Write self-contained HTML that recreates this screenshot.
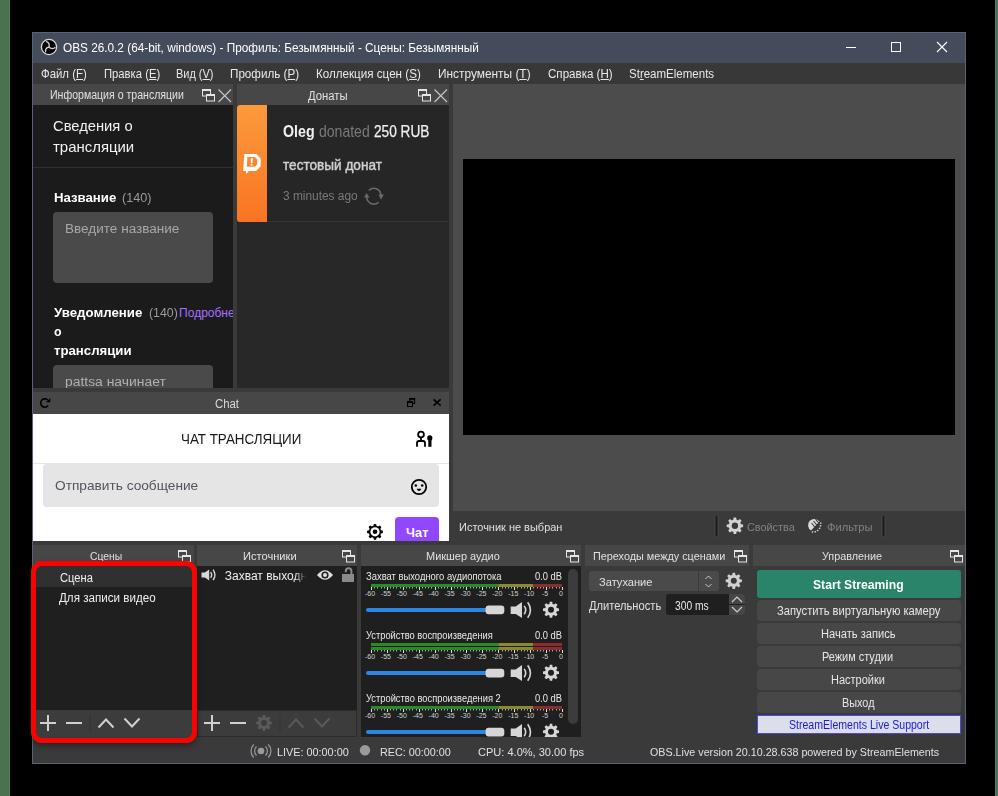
<!DOCTYPE html>
<html><head><meta charset="utf-8"><style>
*{margin:0;padding:0;box-sizing:border-box}
html,body{width:998px;height:796px;overflow:hidden;background:#000;font-family:"Liberation Sans",sans-serif}
.a{position:absolute}
.t{position:absolute;white-space:nowrap;line-height:1;transform-origin:0 0;font-family:"Liberation Sans",sans-serif}
u{text-decoration:underline;text-underline-offset:1px;text-decoration-thickness:1px}
svg{position:absolute;overflow:visible}

</style></head><body>
<div class="a" style="left:0;top:0;width:10px;height:796px;background:#4a7250"></div>
<div class="a" style="left:9px;top:0;width:1px;height:796px;background:#538059"></div>
<div class="a" style="left:995px;top:0;width:3px;height:796px;background:#4a7250"></div>
<div class="a" style="left:995px;top:0;width:1px;height:796px;background:#538059"></div>
<!-- window frame -->
<div class="a" style="left:32px;top:32px;width:934px;height:732px;background:#5b6274"></div>
<div class="a" style="left:33px;top:33px;width:932px;height:730px;background:#3a3a3a"></div>
<!-- title bar -->
<div class="a" style="left:33px;top:33px;width:932px;height:30px;background:#444b5b"></div>
<svg style="left:0;top:0" width="998" height="80">
  <circle cx="49" cy="47" r="7.6" fill="#000" stroke="#d8d8d8" stroke-width="1.3"/>
  <path d="M49 47 Q50.23 42.98 46.00 41.35 M49 47 Q51.86 50.07 55.40 47.22 M49 47 Q44.91 47.94 45.61 52.43" fill="none" stroke="#d0d0d0" stroke-width="1.3"/>
  <rect x="846" y="47" width="10" height="1" fill="#fff"/>
  <rect x="891.5" y="42.5" width="9" height="9" fill="none" stroke="#fff" stroke-width="1"/>
  <path d="M937 42 L947 52 M947 42 L937 52" stroke="#fff" stroke-width="1.1"/>
</svg>
<!-- menu bar -->
<div class="a" style="left:33px;top:63px;width:932px;height:21px;background:#383838"></div>

<!-- info dock -->
<div class="a" style="left:33px;top:84px;width:200px;height:21px;background:#474747"></div>
<div class="a" style="left:33px;top:105px;width:200px;height:283px;background:#1b1b1c;overflow:hidden">
  <div class="a" style="left:0;top:62px;width:200px;height:1px;background:#303034"></div>
  <div class="a" style="left:20px;top:107px;width:160px;height:71px;background:#4a4a4b;border-radius:4px"></div>
  <div class="a" style="left:20px;top:260px;width:160px;height:60px;background:#4a4a4b;border-radius:4px"></div>
</div>
<!-- donations dock -->
<div class="a" style="left:237px;top:84px;width:212px;height:21px;background:#474747"></div>
<div class="a" style="left:237px;top:105px;width:212px;height:283px;background:#282828"></div>
<div class="a" style="left:237px;top:105px;width:211px;height:117px;background:#262626;border-bottom:1px solid #353535"></div>
<div class="a" style="left:237px;top:105px;width:30px;height:117px;background:linear-gradient(#fb9a3b,#f97424);border-radius:3px 0 0 3px"></div>

<!-- preview -->
<div class="a" style="left:453px;top:84px;width:512px;height:427px;background:#4c4c4c"></div>
<div class="a" style="left:463px;top:159px;width:492px;height:276px;background:#000"></div>

<!-- chat dock -->
<div class="a" style="left:33px;top:392px;width:416px;height:22px;background:#474747"></div>
<div class="a" style="left:33px;top:414px;width:416px;height:127px;background:#fff;overflow:hidden">
  <div class="a" style="left:0;top:49px;width:416px;height:1px;background:#e6e6e6"></div>
  <div class="a" style="left:10px;top:50px;width:396px;height:43px;background:#e5e5e5;border-radius:4px"></div>
  <div class="a" style="left:362px;top:103px;width:44px;height:40px;background:#9147ff;border-radius:4px"></div>
</div>

<!-- bottom docks titles -->
<div class="a" style="left:33px;top:545px;width:161px;height:21px;background:#474747"></div>
<div class="a" style="left:197px;top:545px;width:160px;height:21px;background:#474747"></div>
<div class="a" style="left:361px;top:545px;width:220px;height:21px;background:#474747"></div>
<div class="a" style="left:585px;top:545px;width:164px;height:21px;background:#474747"></div>
<div class="a" style="left:753px;top:545px;width:212px;height:21px;background:#474747"></div>
<!-- scenes -->
<div class="a" style="left:33px;top:566px;width:161px;height:144px;background:#1f1f1f"></div>
<div class="a" style="left:33px;top:566px;width:161px;height:21px;background:#303030"></div>
<div class="a" style="left:33px;top:710px;width:161px;height:27px;background:#3c3c3c"></div>
<!-- sources -->
<div class="a" style="left:197px;top:566px;width:160px;height:144px;background:#1f1f1f"></div>
<div class="a" style="left:197px;top:710px;width:160px;height:27px;background:#3c3c3c;border:1px solid #2c2c2c"></div>
<!-- mixer -->
<div class="a" style="left:361px;top:566px;width:220px;height:171px;background:#1f1f1f"></div>
<div class="a" style="left:568px;top:569px;width:10px;height:155px;background:#3c3c3c;border-radius:5px"></div>
<!-- transitions -->
<div class="a" style="left:589px;top:571px;width:130px;height:20px;background:#4a4a4a;border-radius:3px"></div>
<div class="a" style="left:698px;top:571px;width:1px;height:20px;background:#3a3a3a"></div>
<div class="a" style="left:666px;top:594px;width:79px;height:21px;background:#1f1f1f;border-radius:3px"></div>
<div class="a" style="left:729px;top:594px;width:16px;height:10px;background:#464646;border-radius:0 3px 0 0"></div>
<div class="a" style="left:729px;top:605px;width:16px;height:10px;background:#464646;border-radius:0 0 3px 0"></div>
<!-- controls -->
<div class="a" style="left:757px;top:570px;width:204px;height:28px;background:#29846a;border-radius:3px"></div>
<div class="a" style="left:757px;top:600px;width:204px;height:21px;background:#474747;border-radius:4px"></div>
<div class="a" style="left:757px;top:623px;width:204px;height:21px;background:#474747;border-radius:4px"></div>
<div class="a" style="left:757px;top:646px;width:204px;height:21px;background:#474747;border-radius:4px"></div>
<div class="a" style="left:757px;top:669px;width:204px;height:21px;background:#474747;border-radius:4px"></div>
<div class="a" style="left:757px;top:692px;width:204px;height:21px;background:#474747;border-radius:4px"></div>
<div class="a" style="left:757px;top:715px;width:204px;height:19px;background:#dcdeec;border:1px solid #4a4ae0"></div>

<svg style="left:0;top:0" width="998" height="796">
<rect x="202.5" y="89.5" width="8" height="6.5" fill="none" stroke="#e6e6e6" stroke-width="1"/><rect x="202" y="89" width="9" height="2" fill="#e6e6e6"/><rect x="206" y="94" width="9" height="7.5" fill="#474747"/><rect x="206.5" y="94.5" width="8" height="6.5" fill="none" stroke="#e6e6e6" stroke-width="1"/><rect x="206" y="94" width="9" height="2" fill="#e6e6e6"/>
<path d="M218.5 89.5 L231 102 M231 89.5 L218.5 102" stroke="#c8c8c8" stroke-width="1.1"/>
<rect x="418.5" y="89.5" width="8" height="6.5" fill="none" stroke="#e6e6e6" stroke-width="1"/><rect x="418" y="89" width="9" height="2" fill="#e6e6e6"/><rect x="422" y="94" width="9" height="7.5" fill="#474747"/><rect x="422.5" y="94.5" width="8" height="6.5" fill="none" stroke="#e6e6e6" stroke-width="1"/><rect x="422" y="94" width="9" height="2" fill="#e6e6e6"/>
<path d="M434.5 89.5 L447 102 M447 89.5 L434.5 102" stroke="#c8c8c8" stroke-width="1.1"/>
<path d="M244.3 154 L256.5 154 L260.8 158.8 L260.5 166.5 L256 171 L248.8 171 L246.2 174 L245.8 171 L243.2 171 Z M247.3 157 L246.9 166.8 L255 166.8 L257.2 164.5 L257.3 159.5 L255 157 Z" fill="#fff" fill-rule="evenodd"/>
<path d="M250.7 158.3 L253 158.3 L252.5 163.3 L250.9 163.3 Z M250.7 164 L252.6 164 L252.5 165.6 L250.6 165.6 Z" fill="#fff"/>
<path d="M368.8 190.5 A7 7 0 0 1 380.8 196" fill="none" stroke="#6a6a6a" stroke-width="1.5"/>
<path d="M378.5 194.5 L383.8 194.5 L381 199.8 Z" fill="#6a6a6a"/>
<path d="M378.6 202.2 A7 7 0 0 1 366.8 196.8" fill="none" stroke="#6a6a6a" stroke-width="1.5"/>
<path d="M364 197.5 L369.5 197.5 L366.5 193 Z" fill="#6a6a6a"/>
<path d="M47.6 399.8 A4.2 4.2 0 1 0 48.2 405.6" fill="none" stroke="#000" stroke-width="1.6"/>
<path d="M50.3 397.9 L50.3 402.3 L45.9 402.3 Z" fill="#000"/>
<rect x="409.8" y="398.5" width="4.8" height="5" fill="none" stroke="#000" stroke-width="1.1"/><rect x="409.3" y="398" width="5.8" height="1.8" fill="#000"/>
<rect x="407" y="401" width="6" height="6" fill="#474747"/><rect x="407.5" y="401.5" width="5" height="5" fill="none" stroke="#000" stroke-width="1.1"/><rect x="407" y="401" width="6" height="2" fill="#000"/>
<path d="M433.6 399.4 L440.6 405.6 M440.6 399.4 L433.6 405.6" stroke="#000" stroke-width="1.7"/>
<circle cx="421" cy="434.5" r="2.9" fill="none" stroke="#000" stroke-width="1.8"/>
<path d="M421 437.4 V440.5 M417 446.8 V443 Q417 441 419 441 L423 441 Q425 441 425 443 V446.8" fill="none" stroke="#000" stroke-width="1.8"/>
<circle cx="429.8" cy="437.9" r="2.6" fill="#000"/><path d="M428.3 439 H431.5 V446.8 H428.3 Z" fill="#000"/>
<circle cx="419" cy="487" r="7.2" fill="none" stroke="#000" stroke-width="1.8"/>
<circle cx="415.8" cy="485.4" r="1.25" fill="#000"/><circle cx="422.2" cy="485.4" r="1.25" fill="#000"/><path d="M416.6 488.8 Q419 493.2 421.4 488.8 Z" fill="#000"/>
<path d="M372.63 526.07 L373.42 525.80 L373.90 523.88 L376.10 523.88 L376.58 525.80 L377.37 526.07 L378.12 526.44 L379.83 525.42 L381.38 526.97 L380.36 528.68 L380.73 529.43 L381.00 530.22 L382.92 530.70 L382.92 532.90 L381.00 533.38 L380.73 534.17 L380.36 534.92 L381.38 536.63 L379.83 538.18 L378.12 537.16 L377.37 537.53 L376.58 537.80 L376.10 539.72 L373.90 539.72 L373.42 537.80 L372.63 537.53 L371.88 537.16 L370.17 538.18 L368.62 536.63 L369.64 534.92 L369.27 534.17 L369.00 533.38 L367.08 532.90 L367.08 530.70 L369.00 530.22 L369.27 529.43 L369.64 528.68 L368.62 526.97 L370.17 525.42 L371.88 526.44 Z M377.20 531.80 A2.2 2.2 0 1 0 372.80 531.80 A2.2 2.2 0 1 0 377.20 531.80 Z" fill="#000" fill-rule="evenodd"/>
<circle cx="375" cy="531.8" r="4.6" fill="#fff"/><circle cx="375" cy="531.8" r="2.3" fill="#000"/>
<rect x="715" y="515" width="3" height="22" fill="#1e1e1e"/><rect x="715" y="515" width="3" height="22" fill="none" stroke="#555" stroke-width="0.6"/>
<rect x="882" y="515" width="3" height="22" fill="#1e1e1e"/><rect x="882" y="515" width="3" height="22" fill="none" stroke="#555" stroke-width="0.6"/>
<path d="M732.53 520.07 L733.25 519.82 L733.67 517.59 L736.13 517.59 L736.55 519.82 L737.27 520.07 L737.96 520.41 L739.83 519.12 L741.58 520.87 L740.29 522.74 L740.63 523.43 L740.88 524.15 L743.11 524.57 L743.11 527.03 L740.88 527.45 L740.63 528.17 L740.29 528.86 L741.58 530.73 L739.83 532.48 L737.96 531.19 L737.27 531.53 L736.55 531.78 L736.13 534.01 L733.67 534.01 L733.25 531.78 L732.53 531.53 L731.84 531.19 L729.97 532.48 L728.22 530.73 L729.51 528.86 L729.17 528.17 L728.92 527.45 L726.69 527.03 L726.69 524.57 L728.92 524.15 L729.17 523.43 L729.51 522.74 L728.22 520.87 L729.97 519.12 L731.84 520.41 Z M738.10 525.80 A3.2 3.2 0 1 0 731.70 525.80 A3.2 3.2 0 1 0 738.10 525.80 Z" fill="#d2d2d2" fill-rule="evenodd"/>
<path d="M819.5 521.5 A6.3 6.3 0 1 0 811 530.5 Z" fill="#dcdcdc"/>
<path d="M811.5 523 L816 528.5 M813.5 521 L818 526.5 M815.5 519.2 L820 524.5" stroke="#3a3a3a" stroke-width="1.1"/>
<path d="M820.5 522.5 A7.8 7.8 0 0 1 811 531.8" fill="none" stroke="#dcdcdc" stroke-width="1.5" stroke-dasharray="1.3 1.4"/>
<rect x="178.5" y="550.5" width="8" height="6.5" fill="none" stroke="#e6e6e6" stroke-width="1"/><rect x="178" y="550" width="9" height="2" fill="#e6e6e6"/><rect x="182" y="555" width="9" height="7.5" fill="#474747"/><rect x="182.5" y="555.5" width="8" height="6.5" fill="none" stroke="#e6e6e6" stroke-width="1"/><rect x="182" y="555" width="9" height="2" fill="#e6e6e6"/>
<rect x="342.5" y="550.5" width="8" height="6.5" fill="none" stroke="#e6e6e6" stroke-width="1"/><rect x="342" y="550" width="9" height="2" fill="#e6e6e6"/><rect x="346" y="555" width="9" height="7.5" fill="#474747"/><rect x="346.5" y="555.5" width="8" height="6.5" fill="none" stroke="#e6e6e6" stroke-width="1"/><rect x="346" y="555" width="9" height="2" fill="#e6e6e6"/>
<rect x="566.5" y="550.5" width="8" height="6.5" fill="none" stroke="#e6e6e6" stroke-width="1"/><rect x="566" y="550" width="9" height="2" fill="#e6e6e6"/><rect x="570" y="555" width="9" height="7.5" fill="#474747"/><rect x="570.5" y="555.5" width="8" height="6.5" fill="none" stroke="#e6e6e6" stroke-width="1"/><rect x="570" y="555" width="9" height="2" fill="#e6e6e6"/>
<rect x="734.5" y="550.5" width="8" height="6.5" fill="none" stroke="#e6e6e6" stroke-width="1"/><rect x="734" y="550" width="9" height="2" fill="#e6e6e6"/><rect x="738" y="555" width="9" height="7.5" fill="#474747"/><rect x="738.5" y="555.5" width="8" height="6.5" fill="none" stroke="#e6e6e6" stroke-width="1"/><rect x="738" y="555" width="9" height="2" fill="#e6e6e6"/>
<rect x="950.5" y="550.5" width="8" height="6.5" fill="none" stroke="#e6e6e6" stroke-width="1"/><rect x="950" y="550" width="9" height="2" fill="#e6e6e6"/><rect x="954" y="555" width="9" height="7.5" fill="#474747"/><rect x="954.5" y="555.5" width="8" height="6.5" fill="none" stroke="#e6e6e6" stroke-width="1"/><rect x="954" y="555" width="9" height="2" fill="#e6e6e6"/>
<path d="M40 723 H56 M48 715 V731" stroke="#d0d0d0" stroke-width="2"/>
<path d="M66 723 H82" stroke="#d0d0d0" stroke-width="2"/>
<rect x="89.5" y="715" width="1" height="17" fill="#333"/>
<path d="M98.5 727.5 L106 719.5 L113.5 727.5" fill="none" stroke="#d0d0d0" stroke-width="2"/>
<path d="M124.5 718.5 L132 726.5 L139.5 718.5" fill="none" stroke="#d0d0d0" stroke-width="2"/>
<g transform="translate(201.5,569.4) scale(0.68)"><path d="M0 4.5 H5 L11.3 0 V16.2 L5 12 H0 Z" fill="#d8d8d8"/><path d="M13.5 4 Q16.5 8.1 13.5 12.4" fill="none" stroke="#d8d8d8" stroke-width="2.0"/><path d="M17 0.3 Q22.5 8.1 17 15.9" fill="none" stroke="#d8d8d8" stroke-width="2.0"/></g>
<path d="M317 575 Q325 565.5 333 575 Q325 584.5 317 575 Z" fill="#e0e0e0"/><circle cx="325" cy="575" r="3.6" fill="#1f1f1f"/><circle cx="325" cy="575" r="2" fill="#e0e0e0"/>
<rect x="342" y="574" width="12" height="8" fill="#8a8a8a"/><path d="M345.8 572.3 V571 A2.8 2.8 0 0 1 351.4 571 V574" fill="none" stroke="#8a8a8a" stroke-width="2"/>
<path d="M204 723 H220 M212 715 V731" stroke="#d0d0d0" stroke-width="2"/>
<path d="M230 723 H246" stroke="#d0d0d0" stroke-width="2"/>
<path d="M261.70 717.46 L262.40 717.22 L262.81 715.09 L265.19 715.09 L265.60 717.22 L266.30 717.46 L266.96 717.78 L268.75 716.56 L270.44 718.25 L269.22 720.04 L269.54 720.70 L269.78 721.40 L271.91 721.81 L271.91 724.19 L269.78 724.60 L269.54 725.30 L269.22 725.96 L270.44 727.75 L268.75 729.44 L266.96 728.22 L266.30 728.54 L265.60 728.78 L265.19 730.91 L262.81 730.91 L262.40 728.78 L261.70 728.54 L261.04 728.22 L259.25 729.44 L257.56 727.75 L258.78 725.96 L258.46 725.30 L258.22 724.60 L256.09 724.19 L256.09 721.81 L258.22 721.40 L258.46 720.70 L258.78 720.04 L257.56 718.25 L259.25 716.56 L261.04 717.78 Z M267.00 723.00 A3 3 0 1 0 261.00 723.00 A3 3 0 1 0 267.00 723.00 Z" fill="#5a5a5a" fill-rule="evenodd"/>
<rect x="279.5" y="715" width="1" height="17" fill="#333"/>
<path d="M288.5 727.5 L296 719.5 L303.5 727.5" fill="none" stroke="#5a5a5a" stroke-width="2"/>
<path d="M314.5 718.5 L322 726.5 L329.5 718.5" fill="none" stroke="#5a5a5a" stroke-width="2"/>
<rect x="371" y="584" width="127.33" height="3" fill="#2a8a2a"/><rect x="498.33" y="584" width="35.02" height="3" fill="#8a8a2c"/><rect x="533.35" y="584" width="28.65" height="3" fill="#8c2c2c"/><rect x="371" y="587" width="1" height="3" fill="#e0e0e0"/><rect x="374" y="587" width="1" height="1.5" fill="#a8a8a8"/><rect x="377" y="587" width="1" height="1.5" fill="#a8a8a8"/><rect x="381" y="587" width="1" height="1.5" fill="#a8a8a8"/><rect x="384" y="587" width="1" height="1.5" fill="#a8a8a8"/><rect x="387" y="587" width="1" height="3" fill="#e0e0e0"/><rect x="390" y="587" width="1" height="1.5" fill="#a8a8a8"/><rect x="393" y="587" width="1" height="1.5" fill="#a8a8a8"/><rect x="396" y="587" width="1" height="1.5" fill="#a8a8a8"/><rect x="400" y="587" width="1" height="1.5" fill="#a8a8a8"/><rect x="403" y="587" width="1" height="3" fill="#e0e0e0"/><rect x="406" y="587" width="1" height="1.5" fill="#a8a8a8"/><rect x="409" y="587" width="1" height="1.5" fill="#a8a8a8"/><rect x="412" y="587" width="1" height="1.5" fill="#a8a8a8"/><rect x="416" y="587" width="1" height="1.5" fill="#a8a8a8"/><rect x="419" y="587" width="1" height="3" fill="#e0e0e0"/><rect x="422" y="587" width="1" height="1.5" fill="#a8a8a8"/><rect x="425" y="587" width="1" height="1.5" fill="#a8a8a8"/><rect x="428" y="587" width="1" height="1.5" fill="#a8a8a8"/><rect x="431" y="587" width="1" height="1.5" fill="#a8a8a8"/><rect x="435" y="587" width="1" height="3" fill="#e0e0e0"/><rect x="438" y="587" width="1" height="1.5" fill="#a8a8a8"/><rect x="441" y="587" width="1" height="1.5" fill="#a8a8a8"/><rect x="444" y="587" width="1" height="1.5" fill="#a8a8a8"/><rect x="447" y="587" width="1" height="1.5" fill="#a8a8a8"/><rect x="451" y="587" width="1" height="3" fill="#e0e0e0"/><rect x="454" y="587" width="1" height="1.5" fill="#a8a8a8"/><rect x="457" y="587" width="1" height="1.5" fill="#a8a8a8"/><rect x="460" y="587" width="1" height="1.5" fill="#a8a8a8"/><rect x="463" y="587" width="1" height="1.5" fill="#a8a8a8"/><rect x="466" y="587" width="1" height="3" fill="#e0e0e0"/><rect x="470" y="587" width="1" height="1.5" fill="#a8a8a8"/><rect x="473" y="587" width="1" height="1.5" fill="#a8a8a8"/><rect x="476" y="587" width="1" height="1.5" fill="#a8a8a8"/><rect x="479" y="587" width="1" height="1.5" fill="#a8a8a8"/><rect x="482" y="587" width="1" height="3" fill="#e0e0e0"/><rect x="486" y="587" width="1" height="1.5" fill="#a8a8a8"/><rect x="489" y="587" width="1" height="1.5" fill="#a8a8a8"/><rect x="492" y="587" width="1" height="1.5" fill="#a8a8a8"/><rect x="495" y="587" width="1" height="1.5" fill="#a8a8a8"/><rect x="498" y="587" width="1" height="3" fill="#e0e0e0"/><rect x="502" y="587" width="1" height="1.5" fill="#a8a8a8"/><rect x="505" y="587" width="1" height="1.5" fill="#a8a8a8"/><rect x="508" y="587" width="1" height="1.5" fill="#a8a8a8"/><rect x="511" y="587" width="1" height="1.5" fill="#a8a8a8"/><rect x="514" y="587" width="1" height="3" fill="#e0e0e0"/><rect x="517" y="587" width="1" height="1.5" fill="#a8a8a8"/><rect x="521" y="587" width="1" height="1.5" fill="#a8a8a8"/><rect x="524" y="587" width="1" height="1.5" fill="#a8a8a8"/><rect x="527" y="587" width="1" height="1.5" fill="#a8a8a8"/><rect x="530" y="587" width="1" height="3" fill="#e0e0e0"/><rect x="533" y="587" width="1" height="1.5" fill="#a8a8a8"/><rect x="537" y="587" width="1" height="1.5" fill="#a8a8a8"/><rect x="540" y="587" width="1" height="1.5" fill="#a8a8a8"/><rect x="543" y="587" width="1" height="1.5" fill="#a8a8a8"/><rect x="546" y="587" width="1" height="3" fill="#e0e0e0"/><rect x="549" y="587" width="1" height="1.5" fill="#a8a8a8"/><rect x="552" y="587" width="1" height="1.5" fill="#a8a8a8"/><rect x="556" y="587" width="1" height="1.5" fill="#a8a8a8"/><rect x="559" y="587" width="1" height="1.5" fill="#a8a8a8"/><rect x="562" y="587" width="1" height="3" fill="#e0e0e0"/><text x="370.00" y="596" font-size="7" fill="#d0d0d0" text-anchor="middle" font-family="Liberation Sans">-60</text><text x="385.92" y="596" font-size="7" fill="#d0d0d0" text-anchor="middle" font-family="Liberation Sans">-55</text><text x="401.83" y="596" font-size="7" fill="#d0d0d0" text-anchor="middle" font-family="Liberation Sans">-50</text><text x="417.75" y="596" font-size="7" fill="#d0d0d0" text-anchor="middle" font-family="Liberation Sans">-45</text><text x="433.67" y="596" font-size="7" fill="#d0d0d0" text-anchor="middle" font-family="Liberation Sans">-40</text><text x="449.58" y="596" font-size="7" fill="#d0d0d0" text-anchor="middle" font-family="Liberation Sans">-35</text><text x="465.50" y="596" font-size="7" fill="#d0d0d0" text-anchor="middle" font-family="Liberation Sans">-30</text><text x="481.42" y="596" font-size="7" fill="#d0d0d0" text-anchor="middle" font-family="Liberation Sans">-25</text><text x="497.33" y="596" font-size="7" fill="#d0d0d0" text-anchor="middle" font-family="Liberation Sans">-20</text><text x="513.25" y="596" font-size="7" fill="#d0d0d0" text-anchor="middle" font-family="Liberation Sans">-15</text><text x="529.17" y="596" font-size="7" fill="#d0d0d0" text-anchor="middle" font-family="Liberation Sans">-10</text><text x="545.08" y="596" font-size="7" fill="#d0d0d0" text-anchor="middle" font-family="Liberation Sans">-5</text><text x="561.00" y="596" font-size="7" fill="#d0d0d0" text-anchor="middle" font-family="Liberation Sans">0</text>
<rect x="371" y="643" width="127.33" height="3" fill="#2a8a2a"/><rect x="498.33" y="643" width="35.02" height="3" fill="#8a8a2c"/><rect x="533.35" y="643" width="28.65" height="3" fill="#8c2c2c"/><rect x="371" y="647" width="127.33" height="3" fill="#2a8a2a"/><rect x="498.33" y="647" width="35.02" height="3" fill="#8a8a2c"/><rect x="533.35" y="647" width="28.65" height="3" fill="#8c2c2c"/><rect x="371" y="650" width="1" height="3" fill="#e0e0e0"/><rect x="374" y="650" width="1" height="1.5" fill="#a8a8a8"/><rect x="377" y="650" width="1" height="1.5" fill="#a8a8a8"/><rect x="381" y="650" width="1" height="1.5" fill="#a8a8a8"/><rect x="384" y="650" width="1" height="1.5" fill="#a8a8a8"/><rect x="387" y="650" width="1" height="3" fill="#e0e0e0"/><rect x="390" y="650" width="1" height="1.5" fill="#a8a8a8"/><rect x="393" y="650" width="1" height="1.5" fill="#a8a8a8"/><rect x="396" y="650" width="1" height="1.5" fill="#a8a8a8"/><rect x="400" y="650" width="1" height="1.5" fill="#a8a8a8"/><rect x="403" y="650" width="1" height="3" fill="#e0e0e0"/><rect x="406" y="650" width="1" height="1.5" fill="#a8a8a8"/><rect x="409" y="650" width="1" height="1.5" fill="#a8a8a8"/><rect x="412" y="650" width="1" height="1.5" fill="#a8a8a8"/><rect x="416" y="650" width="1" height="1.5" fill="#a8a8a8"/><rect x="419" y="650" width="1" height="3" fill="#e0e0e0"/><rect x="422" y="650" width="1" height="1.5" fill="#a8a8a8"/><rect x="425" y="650" width="1" height="1.5" fill="#a8a8a8"/><rect x="428" y="650" width="1" height="1.5" fill="#a8a8a8"/><rect x="431" y="650" width="1" height="1.5" fill="#a8a8a8"/><rect x="435" y="650" width="1" height="3" fill="#e0e0e0"/><rect x="438" y="650" width="1" height="1.5" fill="#a8a8a8"/><rect x="441" y="650" width="1" height="1.5" fill="#a8a8a8"/><rect x="444" y="650" width="1" height="1.5" fill="#a8a8a8"/><rect x="447" y="650" width="1" height="1.5" fill="#a8a8a8"/><rect x="451" y="650" width="1" height="3" fill="#e0e0e0"/><rect x="454" y="650" width="1" height="1.5" fill="#a8a8a8"/><rect x="457" y="650" width="1" height="1.5" fill="#a8a8a8"/><rect x="460" y="650" width="1" height="1.5" fill="#a8a8a8"/><rect x="463" y="650" width="1" height="1.5" fill="#a8a8a8"/><rect x="466" y="650" width="1" height="3" fill="#e0e0e0"/><rect x="470" y="650" width="1" height="1.5" fill="#a8a8a8"/><rect x="473" y="650" width="1" height="1.5" fill="#a8a8a8"/><rect x="476" y="650" width="1" height="1.5" fill="#a8a8a8"/><rect x="479" y="650" width="1" height="1.5" fill="#a8a8a8"/><rect x="482" y="650" width="1" height="3" fill="#e0e0e0"/><rect x="486" y="650" width="1" height="1.5" fill="#a8a8a8"/><rect x="489" y="650" width="1" height="1.5" fill="#a8a8a8"/><rect x="492" y="650" width="1" height="1.5" fill="#a8a8a8"/><rect x="495" y="650" width="1" height="1.5" fill="#a8a8a8"/><rect x="498" y="650" width="1" height="3" fill="#e0e0e0"/><rect x="502" y="650" width="1" height="1.5" fill="#a8a8a8"/><rect x="505" y="650" width="1" height="1.5" fill="#a8a8a8"/><rect x="508" y="650" width="1" height="1.5" fill="#a8a8a8"/><rect x="511" y="650" width="1" height="1.5" fill="#a8a8a8"/><rect x="514" y="650" width="1" height="3" fill="#e0e0e0"/><rect x="517" y="650" width="1" height="1.5" fill="#a8a8a8"/><rect x="521" y="650" width="1" height="1.5" fill="#a8a8a8"/><rect x="524" y="650" width="1" height="1.5" fill="#a8a8a8"/><rect x="527" y="650" width="1" height="1.5" fill="#a8a8a8"/><rect x="530" y="650" width="1" height="3" fill="#e0e0e0"/><rect x="533" y="650" width="1" height="1.5" fill="#a8a8a8"/><rect x="537" y="650" width="1" height="1.5" fill="#a8a8a8"/><rect x="540" y="650" width="1" height="1.5" fill="#a8a8a8"/><rect x="543" y="650" width="1" height="1.5" fill="#a8a8a8"/><rect x="546" y="650" width="1" height="3" fill="#e0e0e0"/><rect x="549" y="650" width="1" height="1.5" fill="#a8a8a8"/><rect x="552" y="650" width="1" height="1.5" fill="#a8a8a8"/><rect x="556" y="650" width="1" height="1.5" fill="#a8a8a8"/><rect x="559" y="650" width="1" height="1.5" fill="#a8a8a8"/><rect x="562" y="650" width="1" height="3" fill="#e0e0e0"/><text x="370.00" y="659" font-size="7" fill="#d0d0d0" text-anchor="middle" font-family="Liberation Sans">-60</text><text x="385.92" y="659" font-size="7" fill="#d0d0d0" text-anchor="middle" font-family="Liberation Sans">-55</text><text x="401.83" y="659" font-size="7" fill="#d0d0d0" text-anchor="middle" font-family="Liberation Sans">-50</text><text x="417.75" y="659" font-size="7" fill="#d0d0d0" text-anchor="middle" font-family="Liberation Sans">-45</text><text x="433.67" y="659" font-size="7" fill="#d0d0d0" text-anchor="middle" font-family="Liberation Sans">-40</text><text x="449.58" y="659" font-size="7" fill="#d0d0d0" text-anchor="middle" font-family="Liberation Sans">-35</text><text x="465.50" y="659" font-size="7" fill="#d0d0d0" text-anchor="middle" font-family="Liberation Sans">-30</text><text x="481.42" y="659" font-size="7" fill="#d0d0d0" text-anchor="middle" font-family="Liberation Sans">-25</text><text x="497.33" y="659" font-size="7" fill="#d0d0d0" text-anchor="middle" font-family="Liberation Sans">-20</text><text x="513.25" y="659" font-size="7" fill="#d0d0d0" text-anchor="middle" font-family="Liberation Sans">-15</text><text x="529.17" y="659" font-size="7" fill="#d0d0d0" text-anchor="middle" font-family="Liberation Sans">-10</text><text x="545.08" y="659" font-size="7" fill="#d0d0d0" text-anchor="middle" font-family="Liberation Sans">-5</text><text x="561.00" y="659" font-size="7" fill="#d0d0d0" text-anchor="middle" font-family="Liberation Sans">0</text>
<rect x="371" y="706" width="127.33" height="3" fill="#2a8a2a"/><rect x="498.33" y="706" width="35.02" height="3" fill="#8a8a2c"/><rect x="533.35" y="706" width="28.65" height="3" fill="#8c2c2c"/><rect x="371" y="709" width="1" height="3" fill="#e0e0e0"/><rect x="374" y="709" width="1" height="1.5" fill="#a8a8a8"/><rect x="377" y="709" width="1" height="1.5" fill="#a8a8a8"/><rect x="381" y="709" width="1" height="1.5" fill="#a8a8a8"/><rect x="384" y="709" width="1" height="1.5" fill="#a8a8a8"/><rect x="387" y="709" width="1" height="3" fill="#e0e0e0"/><rect x="390" y="709" width="1" height="1.5" fill="#a8a8a8"/><rect x="393" y="709" width="1" height="1.5" fill="#a8a8a8"/><rect x="396" y="709" width="1" height="1.5" fill="#a8a8a8"/><rect x="400" y="709" width="1" height="1.5" fill="#a8a8a8"/><rect x="403" y="709" width="1" height="3" fill="#e0e0e0"/><rect x="406" y="709" width="1" height="1.5" fill="#a8a8a8"/><rect x="409" y="709" width="1" height="1.5" fill="#a8a8a8"/><rect x="412" y="709" width="1" height="1.5" fill="#a8a8a8"/><rect x="416" y="709" width="1" height="1.5" fill="#a8a8a8"/><rect x="419" y="709" width="1" height="3" fill="#e0e0e0"/><rect x="422" y="709" width="1" height="1.5" fill="#a8a8a8"/><rect x="425" y="709" width="1" height="1.5" fill="#a8a8a8"/><rect x="428" y="709" width="1" height="1.5" fill="#a8a8a8"/><rect x="431" y="709" width="1" height="1.5" fill="#a8a8a8"/><rect x="435" y="709" width="1" height="3" fill="#e0e0e0"/><rect x="438" y="709" width="1" height="1.5" fill="#a8a8a8"/><rect x="441" y="709" width="1" height="1.5" fill="#a8a8a8"/><rect x="444" y="709" width="1" height="1.5" fill="#a8a8a8"/><rect x="447" y="709" width="1" height="1.5" fill="#a8a8a8"/><rect x="451" y="709" width="1" height="3" fill="#e0e0e0"/><rect x="454" y="709" width="1" height="1.5" fill="#a8a8a8"/><rect x="457" y="709" width="1" height="1.5" fill="#a8a8a8"/><rect x="460" y="709" width="1" height="1.5" fill="#a8a8a8"/><rect x="463" y="709" width="1" height="1.5" fill="#a8a8a8"/><rect x="466" y="709" width="1" height="3" fill="#e0e0e0"/><rect x="470" y="709" width="1" height="1.5" fill="#a8a8a8"/><rect x="473" y="709" width="1" height="1.5" fill="#a8a8a8"/><rect x="476" y="709" width="1" height="1.5" fill="#a8a8a8"/><rect x="479" y="709" width="1" height="1.5" fill="#a8a8a8"/><rect x="482" y="709" width="1" height="3" fill="#e0e0e0"/><rect x="486" y="709" width="1" height="1.5" fill="#a8a8a8"/><rect x="489" y="709" width="1" height="1.5" fill="#a8a8a8"/><rect x="492" y="709" width="1" height="1.5" fill="#a8a8a8"/><rect x="495" y="709" width="1" height="1.5" fill="#a8a8a8"/><rect x="498" y="709" width="1" height="3" fill="#e0e0e0"/><rect x="502" y="709" width="1" height="1.5" fill="#a8a8a8"/><rect x="505" y="709" width="1" height="1.5" fill="#a8a8a8"/><rect x="508" y="709" width="1" height="1.5" fill="#a8a8a8"/><rect x="511" y="709" width="1" height="1.5" fill="#a8a8a8"/><rect x="514" y="709" width="1" height="3" fill="#e0e0e0"/><rect x="517" y="709" width="1" height="1.5" fill="#a8a8a8"/><rect x="521" y="709" width="1" height="1.5" fill="#a8a8a8"/><rect x="524" y="709" width="1" height="1.5" fill="#a8a8a8"/><rect x="527" y="709" width="1" height="1.5" fill="#a8a8a8"/><rect x="530" y="709" width="1" height="3" fill="#e0e0e0"/><rect x="533" y="709" width="1" height="1.5" fill="#a8a8a8"/><rect x="537" y="709" width="1" height="1.5" fill="#a8a8a8"/><rect x="540" y="709" width="1" height="1.5" fill="#a8a8a8"/><rect x="543" y="709" width="1" height="1.5" fill="#a8a8a8"/><rect x="546" y="709" width="1" height="3" fill="#e0e0e0"/><rect x="549" y="709" width="1" height="1.5" fill="#a8a8a8"/><rect x="552" y="709" width="1" height="1.5" fill="#a8a8a8"/><rect x="556" y="709" width="1" height="1.5" fill="#a8a8a8"/><rect x="559" y="709" width="1" height="1.5" fill="#a8a8a8"/><rect x="562" y="709" width="1" height="3" fill="#e0e0e0"/><text x="370.00" y="718" font-size="7" fill="#d0d0d0" text-anchor="middle" font-family="Liberation Sans">-60</text><text x="385.92" y="718" font-size="7" fill="#d0d0d0" text-anchor="middle" font-family="Liberation Sans">-55</text><text x="401.83" y="718" font-size="7" fill="#d0d0d0" text-anchor="middle" font-family="Liberation Sans">-50</text><text x="417.75" y="718" font-size="7" fill="#d0d0d0" text-anchor="middle" font-family="Liberation Sans">-45</text><text x="433.67" y="718" font-size="7" fill="#d0d0d0" text-anchor="middle" font-family="Liberation Sans">-40</text><text x="449.58" y="718" font-size="7" fill="#d0d0d0" text-anchor="middle" font-family="Liberation Sans">-35</text><text x="465.50" y="718" font-size="7" fill="#d0d0d0" text-anchor="middle" font-family="Liberation Sans">-30</text><text x="481.42" y="718" font-size="7" fill="#d0d0d0" text-anchor="middle" font-family="Liberation Sans">-25</text><text x="497.33" y="718" font-size="7" fill="#d0d0d0" text-anchor="middle" font-family="Liberation Sans">-20</text><text x="513.25" y="718" font-size="7" fill="#d0d0d0" text-anchor="middle" font-family="Liberation Sans">-15</text><text x="529.17" y="718" font-size="7" fill="#d0d0d0" text-anchor="middle" font-family="Liberation Sans">-10</text><text x="545.08" y="718" font-size="7" fill="#d0d0d0" text-anchor="middle" font-family="Liberation Sans">-5</text><text x="561.00" y="718" font-size="7" fill="#d0d0d0" text-anchor="middle" font-family="Liberation Sans">0</text>
<rect x="366" y="608" width="122" height="4" rx="2" fill="#2d87e2"/>
<rect x="485.6" y="605.6" width="18.7" height="8.7" rx="3" fill="#d6d6d6"/>
<rect x="366" y="671" width="122" height="4" rx="2" fill="#2d87e2"/>
<rect x="485.6" y="668.7" width="18.7" height="8.7" rx="3" fill="#d6d6d6"/>
<rect x="366" y="730" width="122" height="4" rx="2" fill="#2d87e2"/>
<rect x="485.6" y="727.8" width="18.7" height="8.7" rx="3" fill="#d6d6d6"/>
<defs><clipPath id="mixclip"><rect x="361" y="566" width="207" height="171"/></clipPath></defs>
<g clip-path="url(#mixclip)">
<g transform="translate(510.7,601.9) scale(1.0)"><path d="M0 4.5 H5 L11.3 0 V16.2 L5 12 H0 Z" fill="#d6d6d6"/><path d="M13.5 4 Q16.5 8.1 13.5 12.4" fill="none" stroke="#d6d6d6" stroke-width="1.6"/><path d="M17 0.3 Q22.5 8.1 17 15.9" fill="none" stroke="#d6d6d6" stroke-width="1.6"/></g>
<path d="M548.70 604.16 L549.40 603.92 L549.80 601.69 L552.20 601.69 L552.60 603.92 L553.30 604.16 L553.96 604.48 L555.81 603.18 L557.52 604.89 L556.22 606.74 L556.54 607.40 L556.78 608.10 L559.01 608.50 L559.01 610.90 L556.78 611.30 L556.54 612.00 L556.22 612.66 L557.52 614.51 L555.81 616.22 L553.96 614.92 L553.30 615.24 L552.60 615.48 L552.20 617.71 L549.80 617.71 L549.40 615.48 L548.70 615.24 L548.04 614.92 L546.19 616.22 L544.48 614.51 L545.78 612.66 L545.46 612.00 L545.22 611.30 L542.99 610.90 L542.99 608.50 L545.22 608.10 L545.46 607.40 L545.78 606.74 L544.48 604.89 L546.19 603.18 L548.04 604.48 Z M554.00 609.70 A3.0 3.0 0 1 0 548.00 609.70 A3.0 3.0 0 1 0 554.00 609.70 Z" fill="#d6d6d6" fill-rule="evenodd"/>
<g transform="translate(510.7,664.9) scale(1.0)"><path d="M0 4.5 H5 L11.3 0 V16.2 L5 12 H0 Z" fill="#d6d6d6"/><path d="M13.5 4 Q16.5 8.1 13.5 12.4" fill="none" stroke="#d6d6d6" stroke-width="1.6"/><path d="M17 0.3 Q22.5 8.1 17 15.9" fill="none" stroke="#d6d6d6" stroke-width="1.6"/></g>
<path d="M548.70 667.16 L549.40 666.92 L549.80 664.69 L552.20 664.69 L552.60 666.92 L553.30 667.16 L553.96 667.48 L555.81 666.18 L557.52 667.89 L556.22 669.74 L556.54 670.40 L556.78 671.10 L559.01 671.50 L559.01 673.90 L556.78 674.30 L556.54 675.00 L556.22 675.66 L557.52 677.51 L555.81 679.22 L553.96 677.92 L553.30 678.24 L552.60 678.48 L552.20 680.71 L549.80 680.71 L549.40 678.48 L548.70 678.24 L548.04 677.92 L546.19 679.22 L544.48 677.51 L545.78 675.66 L545.46 675.00 L545.22 674.30 L542.99 673.90 L542.99 671.50 L545.22 671.10 L545.46 670.40 L545.78 669.74 L544.48 667.89 L546.19 666.18 L548.04 667.48 Z M554.00 672.70 A3.0 3.0 0 1 0 548.00 672.70 A3.0 3.0 0 1 0 554.00 672.70 Z" fill="#d6d6d6" fill-rule="evenodd"/>
<g transform="translate(510.7,723.9) scale(1.0)"><path d="M0 4.5 H5 L11.3 0 V16.2 L5 12 H0 Z" fill="#d6d6d6"/><path d="M13.5 4 Q16.5 8.1 13.5 12.4" fill="none" stroke="#d6d6d6" stroke-width="1.6"/><path d="M17 0.3 Q22.5 8.1 17 15.9" fill="none" stroke="#d6d6d6" stroke-width="1.6"/></g>
<path d="M548.70 726.16 L549.40 725.92 L549.80 723.69 L552.20 723.69 L552.60 725.92 L553.30 726.16 L553.96 726.48 L555.81 725.18 L557.52 726.89 L556.22 728.74 L556.54 729.40 L556.78 730.10 L559.01 730.50 L559.01 732.90 L556.78 733.30 L556.54 734.00 L556.22 734.66 L557.52 736.51 L555.81 738.22 L553.96 736.92 L553.30 737.24 L552.60 737.48 L552.20 739.71 L549.80 739.71 L549.40 737.48 L548.70 737.24 L548.04 736.92 L546.19 738.22 L544.48 736.51 L545.78 734.66 L545.46 734.00 L545.22 733.30 L542.99 732.90 L542.99 730.50 L545.22 730.10 L545.46 729.40 L545.78 728.74 L544.48 726.89 L546.19 725.18 L548.04 726.48 Z M554.00 731.70 A3.0 3.0 0 1 0 548.00 731.70 A3.0 3.0 0 1 0 554.00 731.70 Z" fill="#d6d6d6" fill-rule="evenodd"/>
</g>
<path d="M705.5 579 L708.5 576 L711.5 579 M705.5 584 L708.5 587 L711.5 584" fill="none" stroke="#c8c8c8" stroke-width="1"/>
<path d="M731.47 575.16 L732.18 574.92 L732.58 572.69 L735.02 572.69 L735.42 574.92 L736.13 575.16 L736.81 575.49 L738.67 574.20 L740.40 575.93 L739.11 577.79 L739.44 578.47 L739.68 579.18 L741.91 579.58 L741.91 582.02 L739.68 582.42 L739.44 583.13 L739.11 583.81 L740.40 585.67 L738.67 587.40 L736.81 586.11 L736.13 586.44 L735.42 586.68 L735.02 588.91 L732.58 588.91 L732.18 586.68 L731.47 586.44 L730.79 586.11 L728.93 587.40 L727.20 585.67 L728.49 583.81 L728.16 583.13 L727.92 582.42 L725.69 582.02 L725.69 579.58 L727.92 579.18 L728.16 578.47 L728.49 577.79 L727.20 575.93 L728.93 574.20 L730.79 575.49 Z M736.80 580.80 A3.0 3.0 0 1 0 730.80 580.80 A3.0 3.0 0 1 0 736.80 580.80 Z" fill="#d0d0d0" fill-rule="evenodd"/>
<path d="M732 602 L737 597 L742 602 M732 607 L737 612 L742 607" fill="none" stroke="#d0d0d0" stroke-width="1.2"/>
<circle cx="261" cy="751" r="3.3" fill="#9a9a9a"/>
<path d="M256.5 746.5 A6.2 6.2 0 0 0 256.5 755.5 M265.5 746.5 A6.2 6.2 0 0 1 265.5 755.5" fill="none" stroke="#9a9a9a" stroke-width="1.2"/>
<path d="M253.8 744.5 A9 9 0 0 0 253.8 757.5 M268.2 744.5 A9 9 0 0 1 268.2 757.5" fill="none" stroke="#9a9a9a" stroke-width="1.2"/>
<circle cx="365" cy="750.3" r="5.2" fill="#9a9a9a"/>
</svg>
<div class="t" id="t0" style="left:62.60px;top:42.34px;font-size:12px;color:#ffffff;font-weight:400;transform:scaleX(0.9821);">OBS 26.0.2 (64-bit, windows) - Профиль: Безымянный - Сцены: Безымянный</div>
<div class="t" id="t1" style="left:41.00px;top:67.84px;font-size:12px;color:#e8e8e8;font-weight:400;transform:scaleX(0.9484);">Файл (<u>F</u>)</div>
<div class="t" id="t2" style="left:103.50px;top:67.84px;font-size:12px;color:#e8e8e8;font-weight:400;transform:scaleX(0.9384);">Правка (<u>E</u>)</div>
<div class="t" id="t3" style="left:176.30px;top:67.84px;font-size:12px;color:#e8e8e8;font-weight:400;transform:scaleX(0.9132);">Вид (<u>V</u>)</div>
<div class="t" id="t4" style="left:230.40px;top:67.84px;font-size:12px;color:#e8e8e8;font-weight:400;transform:scaleX(0.9711);">Профиль (<u>P</u>)</div>
<div class="t" id="t5" style="left:316.40px;top:67.84px;font-size:12px;color:#e8e8e8;font-weight:400;transform:scaleX(0.9692);">Коллекция сцен (<u>S</u>)</div>
<div class="t" id="t6" style="left:438.00px;top:67.84px;font-size:12px;color:#e8e8e8;font-weight:400;transform:scaleX(0.9904);">Инструменты (<u>T</u>)</div>
<div class="t" id="t7" style="left:547.70px;top:67.84px;font-size:12px;color:#e8e8e8;font-weight:400;transform:scaleX(0.9645);">Справка (<u>H</u>)</div>
<div class="t" id="t8" style="left:628.90px;top:67.84px;font-size:12px;color:#e8e8e8;font-weight:400;transform:scaleX(0.9592);">St<u>r</u>eamElements</div>
<div class="t" id="t9" style="left:50.00px;top:89.34px;font-size:12px;color:#e0e0e0;font-weight:400;transform:scaleX(0.8806);">Информация о трансляции</div>
<div class="t" id="t10" style="left:307.90px;top:89.94px;font-size:12px;color:#e0e0e0;font-weight:400;transform:scaleX(0.9408);">Донаты</div>
<div class="t" id="t11" style="left:53.00px;top:117.80px;font-size:15px;color:#f2f2f2;font-weight:400;transform:scaleX(0.9821);">Сведения о</div>
<div class="t" id="t12" style="left:53.00px;top:138.50px;font-size:15px;color:#f2f2f2;font-weight:400;transform:scaleX(0.9956);">трансляции</div>
<div class="t" id="t13" style="left:53.60px;top:192.34px;font-size:12px;color:#ffffff;font-weight:700;transform:scaleX(1.0996);">Название</div>
<div class="t" id="t14" style="left:121.50px;top:192.34px;font-size:12px;color:#9a9a9e;font-weight:400;transform:scaleX(1.0530);">(140)</div>
<div class="t" id="t15" style="left:65.40px;top:222.94px;font-size:12px;color:#a8a8ac;font-weight:400;transform:scaleX(1.1290);">Введите название</div>
<div class="t" id="t16" style="left:53.90px;top:306.84px;font-size:12px;color:#ffffff;font-weight:700;transform:scaleX(1.1035);">Уведомление</div>
<div class="t" id="t17" style="left:148.60px;top:306.84px;font-size:12px;color:#9a9a9e;font-weight:400;transform:scaleX(1.0280);">(140)</div>
<div class="a" style="left:33px;top:290px;width:200px;height:40px;overflow:hidden"><div class="t" id="t18" style="left:146.10px;top:16.84px;font-size:12px;color:#a970ff;font-weight:400;">Подробнее</div></div>
<div class="t" id="t19" style="left:53.90px;top:326.04px;font-size:12px;color:#ffffff;font-weight:700;transform:scaleX(1.0349);">о</div>
<div class="t" id="t20" style="left:53.90px;top:345.34px;font-size:12px;color:#ffffff;font-weight:700;transform:scaleX(1.0997);">трансляции</div>
<div class="a" style="left:33px;top:360px;width:200px;height:28px;overflow:hidden"><div class="t" id="t21" style="left:32.20px;top:16.34px;font-size:12px;color:#b0b0b4;font-weight:400;transform:scaleX(1.1574);">pattsa начинает</div></div>
<div class="t" id="t22" style="left:282.50px;top:123.86px;font-size:16px;color:#f0f0f0;font-weight:700;transform:scaleX(0.8886);">Oleg</div>
<div class="t" id="t23" style="left:318.70px;top:123.86px;font-size:16px;color:#7a7a7a;font-weight:400;transform:scaleX(0.8765);">donated</div>
<div class="t" id="t24" style="left:374.00px;top:123.86px;font-size:16px;color:#f0f0f0;font-weight:400;transform:scaleX(0.8533);-webkit-text-stroke:0.25px #f0f0f0;">250 RUB</div>
<div class="t" id="t25" style="left:282.50px;top:158.13px;font-size:14.5px;color:#d0d0d0;font-weight:400;transform:scaleX(0.9373);-webkit-text-stroke:0.45px #d0d0d0;">тестовый донат</div>
<div class="t" id="t26" style="left:282.50px;top:190.14px;font-size:12px;color:#7a7a7a;font-weight:400;transform:scaleX(0.9908);">3 minutes ago</div>
<div class="t" id="t27" style="left:215.20px;top:397.92px;font-size:12.5px;color:#d8d8d8;font-weight:400;transform:scaleX(0.9089);">Chat</div>
<div class="t" id="t28" style="left:181.00px;top:431.93px;font-size:14.5px;color:#18181b;font-weight:400;transform:scaleX(0.9229);">ЧАТ ТРАНСЛЯЦИИ</div>
<div class="t" id="t29" style="left:55.40px;top:479.37px;font-size:13.5px;color:#53535f;font-weight:400;transform:scaleX(1.0134);">Отправить сообщение</div>
<div class="t" id="t30" style="left:406.00px;top:526.10px;font-size:13px;color:#ffffff;font-weight:700;transform:scaleX(0.9941);">Чат</div>
<div class="t" id="t31" style="left:458.60px;top:521.57px;font-size:11.5px;color:#e0e0e0;font-weight:400;transform:scaleX(0.9544);">Источник не выбран</div>
<div class="t" id="t32" style="left:746.50px;top:522.27px;font-size:11.5px;color:#828282;font-weight:400;transform:scaleX(0.9446);">Свойства</div>
<div class="t" id="t33" style="left:826.70px;top:522.27px;font-size:11.5px;color:#828282;font-weight:400;transform:scaleX(0.9722);">Фильтры</div>
<div class="t" id="t34" style="left:90.00px;top:550.97px;font-size:11.5px;color:#e0e0e0;font-weight:400;transform:scaleX(0.9027);">Сцены</div>
<div class="t" id="t35" style="left:242.60px;top:550.97px;font-size:11.5px;color:#e0e0e0;font-weight:400;transform:scaleX(0.9652);">Источники</div>
<div class="t" id="t36" style="left:426.20px;top:550.77px;font-size:11.5px;color:#e0e0e0;font-weight:400;transform:scaleX(0.9532);">Микшер аудио</div>
<div class="t" id="t37" style="left:593.00px;top:550.57px;font-size:11.5px;color:#e0e0e0;font-weight:400;transform:scaleX(0.9420);">Переходы между сценами</div>
<div class="t" id="t38" style="left:822.10px;top:550.57px;font-size:11.5px;color:#e0e0e0;font-weight:400;transform:scaleX(0.9384);">Управление</div>
<div class="t" id="t39" style="left:59.50px;top:571.62px;font-size:12.5px;color:#f0f0f0;font-weight:400;transform:scaleX(0.8953);">Сцена</div>
<div class="t" id="t40" style="left:59.10px;top:592.22px;font-size:12.5px;color:#f0f0f0;font-weight:400;transform:scaleX(0.9291);">Для записи видео</div>
<div class="a" style="left:197px;top:566px;width:113px;height:24px;overflow:hidden"><div class="t" id="t41" style="left:27.80px;top:4.34px;font-size:12px;color:#f0f0f0;font-weight:400;-webkit-mask-image:linear-gradient(90deg,#000 0,#000 70px,transparent 81px)">Захват выходного</div></div>
<div class="t" id="t42" style="left:366.00px;top:572.03px;font-size:10px;color:#e8e8e8;font-weight:400;transform:scaleX(0.9419);">Захват выходного аудиопотока</div>
<div class="t" id="t43" style="left:535.00px;top:572.03px;font-size:10px;color:#e8e8e8;font-weight:400;transform:scaleX(0.9335);">0.0 dB</div>
<div class="t" id="t44" style="left:366.00px;top:631.03px;font-size:10px;color:#e8e8e8;font-weight:400;transform:scaleX(0.9321);">Устройство воспроизведения</div>
<div class="t" id="t45" style="left:535.00px;top:631.03px;font-size:10px;color:#e8e8e8;font-weight:400;transform:scaleX(0.9335);">0.0 dB</div>
<div class="t" id="t46" style="left:366.00px;top:694.03px;font-size:10px;color:#e8e8e8;font-weight:400;transform:scaleX(0.9337);">Устройство воспроизведения 2</div>
<div class="t" id="t47" style="left:535.00px;top:694.03px;font-size:10px;color:#e8e8e8;font-weight:400;transform:scaleX(0.9335);">0.0 dB</div>
<div class="t" id="t48" style="left:598.60px;top:576.77px;font-size:11.5px;color:#e0e0e0;font-weight:400;transform:scaleX(0.9651);">Затухание</div>
<div class="t" id="t49" style="left:589.00px;top:599.74px;font-size:12px;color:#e0e0e0;font-weight:400;transform:scaleX(0.9282);">Длительность</div>
<div class="t" id="t50" style="left:674.70px;top:599.74px;font-size:12px;color:#e8e8e8;font-weight:400;transform:scaleX(0.8562);">300 ms</div>
<div class="t" id="t51" style="left:813.30px;top:579.24px;font-size:12px;color:#ffffff;font-weight:700;transform:scaleX(1.0139);">Start Streaming</div>
<div class="t" id="t52" style="left:776.60px;top:605.44px;font-size:12px;color:#e6e6e6;font-weight:400;transform:scaleX(0.9332);">Запустить виртуальную камеру</div>
<div class="t" id="t53" style="left:821.00px;top:628.14px;font-size:12px;color:#e6e6e6;font-weight:400;transform:scaleX(0.9272);">Начать запись</div>
<div class="t" id="t54" style="left:822.30px;top:651.14px;font-size:12px;color:#e6e6e6;font-weight:400;transform:scaleX(0.9104);">Режим студии</div>
<div class="t" id="t55" style="left:831.30px;top:674.14px;font-size:12px;color:#e6e6e6;font-weight:400;transform:scaleX(0.9160);">Настройки</div>
<div class="t" id="t56" style="left:841.50px;top:697.14px;font-size:12px;color:#e6e6e6;font-weight:400;transform:scaleX(0.9051);">Выход</div>
<div class="t" id="t57" style="left:788.50px;top:719.34px;font-size:12px;color:#1a1ae6;font-weight:400;transform:scaleX(0.8794);">StreamElements Live Support</div>
<div class="t" id="t58" style="left:276.50px;top:746.79px;font-size:11px;color:#e0e0e0;font-weight:400;transform:scaleX(0.9851);">LIVE: 00:00:00</div>
<div class="t" id="t59" style="left:380.40px;top:746.79px;font-size:11px;color:#e0e0e0;font-weight:400;transform:scaleX(0.9812);">REC: 00:00:00</div>
<div class="t" id="t60" style="left:477.80px;top:746.79px;font-size:11px;color:#e0e0e0;font-weight:400;transform:scaleX(1.0030);">CPU: 4.0%, 30.00 fps</div>
<div class="t" id="t61" style="left:649.60px;top:746.79px;font-size:11px;color:#e0e0e0;font-weight:400;transform:scaleX(0.9748);">OBS.Live version 20.10.28.638 powered by StreamElements</div>
<!-- red highlight -->
<div class="a" style="left:31px;top:561px;width:166px;height:182px;border:5px solid #ff0000;border-radius:11px;box-shadow:0 3px 6px rgba(0,0,0,.35)"></div>

</body></html>
